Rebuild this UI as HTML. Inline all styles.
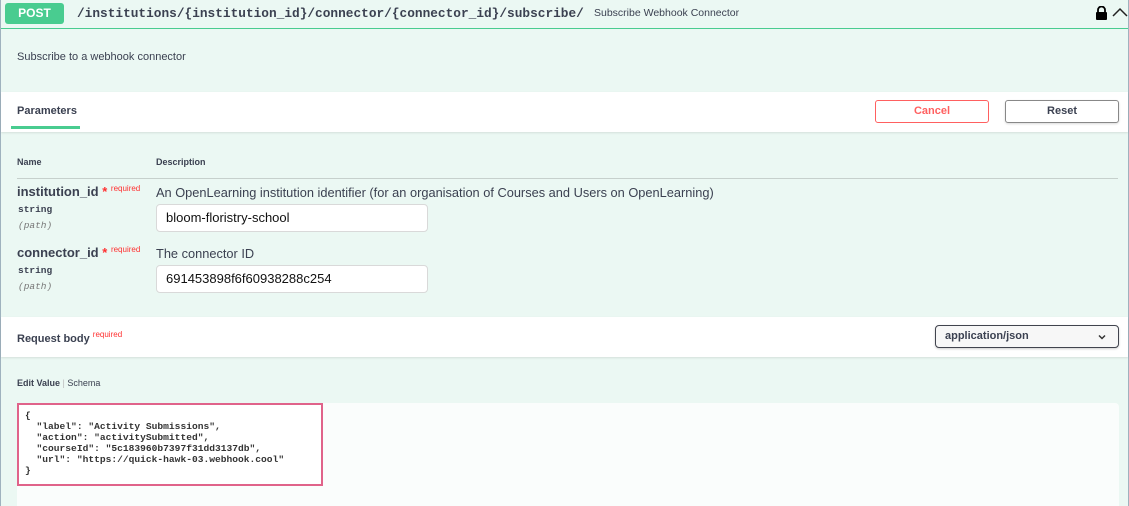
<!DOCTYPE html>
<html><head><style>
*{box-sizing:border-box;margin:0;padding:0}
body{width:1129px;height:506px;overflow:hidden;background:#fff;font-family:"Liberation Sans",sans-serif;color:#3b4151;position:relative}
.frame{position:absolute;left:0;top:0;width:1129px;height:506px;border:1px solid #9fb2be;border-top:none;border-bottom:none;background:#ebf8f3}
.abs{position:absolute}
.mono{font-family:"Liberation Mono",monospace}
</style></head><body>
<div class="frame">
  <div class="abs" style="left:0;top:0;width:1127px;height:29px;border-bottom:1px solid #49cc90"></div>
  <div class="abs" style="left:4px;top:3px;width:59px;height:21px;background:#49cc90;border-radius:3px;color:#fff;font-weight:bold;font-size:12px;text-align:center;line-height:21px">POST</div>
  <div class="abs mono" style="left:76px;top:4px;font-size:12.8px;font-weight:bold;line-height:20px;color:#3b4151">/institutions/{institution_id}/connector/{connector_id}/subscribe/</div>
  <div class="abs" style="left:593px;top:7px;font-size:10.5px;color:#3b4151">Subscribe Webhook Connector</div>
  <svg class="abs" style="left:1094px;top:6px" width="13" height="14" viewBox="0 0 13 14"><path d="M3 6V4a3.5 3.5 0 0 1 7 0v2" fill="none" stroke="#000" stroke-width="1.8"/><rect x="1" y="6" width="11" height="8" rx="1" fill="#000"/></svg>
  <svg class="abs" style="left:1111px;top:7px" width="16" height="10" viewBox="0 0 16 10"><path d="M1 9L8 2l7 7" fill="none" stroke="#222" stroke-width="1.5"/></svg>

  <div class="abs" style="left:16px;top:51px;font-size:11px">Subscribe to a webhook connector</div>

  <div class="abs" style="left:0;top:92px;width:1127px;height:40px;background:#fff;box-shadow:0 1px 2px rgba(0,0,0,.1)"></div>
  <div class="abs" style="left:16px;top:105px;font-size:11px;font-weight:bold">Parameters</div>
  <div class="abs" style="left:10px;top:126px;width:69px;height:3px;background:#49cc90"></div>
  <div class="abs" style="left:874px;top:100px;width:114px;height:23px;border:1px solid #ff6060;border-radius:3px;color:#ff6060;font-size:11px;font-weight:bold;text-align:center;line-height:21px">Cancel</div>
  <div class="abs" style="left:1004px;top:100px;width:114px;height:23px;border:1px solid #888;border-radius:3px;font-size:11px;font-weight:bold;text-align:center;line-height:21px;box-shadow:0 1px 2px rgba(0,0,0,.15)">Reset</div>

  <div class="abs" style="left:16px;top:157px;font-size:9px;font-weight:bold">Name</div>
  <div class="abs" style="left:155px;top:157px;font-size:9px;font-weight:bold">Description</div>
  <div class="abs" style="left:16px;top:178px;width:1101px;height:1px;background:#c6d0cc"></div>

  <div class="abs" style="left:16px;top:184px;font-size:13px;font-weight:bold">institution_id <span style="color:#ff3030;font-size:13px">*</span> <span style="color:#ff3030;font-size:8px;font-weight:normal;vertical-align:5px">required</span></div>
  <div class="abs mono" style="left:17px;top:204px;font-size:9.5px;font-weight:bold">string</div>
  <div class="abs mono" style="left:17px;top:220px;font-size:9.5px;font-style:italic;color:#777">(path)</div>
  <div class="abs" style="left:155px;top:185px;font-size:12.8px">An OpenLearning institution identifier (for an organisation of Courses and Users on OpenLearning)</div>
  <div class="abs" style="left:155px;top:204px;width:272px;height:28px;background:#fff;border:1px solid #d9d9d9;border-radius:4px;font-size:13px;padding-left:9px;line-height:26px;color:#111">bloom-floristry-school</div>

  <div class="abs" style="left:16px;top:245px;font-size:13px;font-weight:bold">connector_id <span style="color:#ff3030;font-size:13px">*</span> <span style="color:#ff3030;font-size:8px;font-weight:normal;vertical-align:5px">required</span></div>
  <div class="abs mono" style="left:17px;top:265px;font-size:9.5px;font-weight:bold">string</div>
  <div class="abs mono" style="left:17px;top:281px;font-size:9.5px;font-style:italic;color:#777">(path)</div>
  <div class="abs" style="left:155px;top:246px;font-size:12.8px">The connector ID</div>
  <div class="abs" style="left:155px;top:265px;width:272px;height:28px;background:#fff;border:1px solid #d9d9d9;border-radius:4px;font-size:13px;padding-left:9px;line-height:26px;color:#111">691453898f6f60938288c254</div>

  <div class="abs" style="left:0;top:317px;width:1127px;height:40px;background:#fff;box-shadow:0 1px 2px rgba(0,0,0,.1)"></div>
  <div class="abs" style="left:16px;top:330px;font-size:11px;font-weight:bold">Request body <span style="color:#ff3030;font-size:8px;font-weight:normal;vertical-align:5px">required</span></div>
  <div class="abs" style="left:934px;top:325px;width:184px;height:23px;background:#f7f7f7;border:1px solid #41444e;border-radius:4px;font-size:11px;font-weight:bold;padding-left:9px;line-height:21px;box-shadow:0 1px 2px rgba(0,0,0,.2)">application/json<svg style="position:absolute;right:12px;top:8px" width="8" height="6" viewBox="0 0 8 6"><path d="M1 1.5l3 3 3-3" fill="none" stroke="#333" stroke-width="1.5"/></svg></div>

  <div class="abs" style="left:16px;top:378px;font-size:9px"><b>Edit Value</b> <span style="color:#bbb">|</span> Schema</div>
  <div class="abs" style="left:16px;top:403px;width:1102px;height:103px;background:#fafdfc;border-radius:4px 4px 0 0"></div>
  <div class="abs" style="left:16px;top:403px;width:306px;height:83px;border:2.5px solid #e0638a;background:#fff"></div>
  <pre class="abs mono" style="left:24px;top:410px;font-size:9.6px;line-height:11px;font-weight:bold;color:#333">{
  "label": "Activity Submissions",
  "action": "activitySubmitted",
  "courseId": "5c183960b7397f31dd3137db",
  "url": "https://quick-hawk-03.webhook.cool"
}</pre>
</div>
</body></html>
